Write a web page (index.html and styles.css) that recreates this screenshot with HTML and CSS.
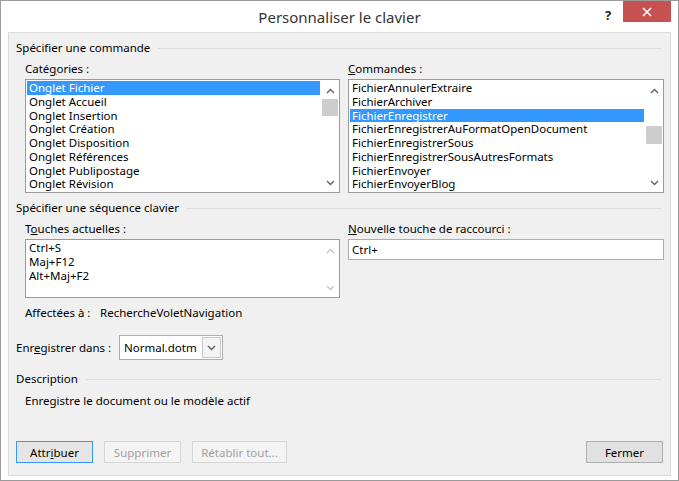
FILE: index.html
```html
<!DOCTYPE html>
<html>
<head>
    <meta charset="utf-8">
    <link rel="stylesheet" href="styles.css">
</head>
<body>
    <div class="window">
        <div class="titlebar">
            <div class="title">Personnaliser le clavier</div>
            <div class="controls">
                <div class="help">?</div>
                <div class="close">
                    <svg width="10" height="10" viewBox="0 0 10 10"><path d="M1 1L9 9M9 1L1 9" stroke="#fff" stroke-width="1.6" fill="none"/></svg>
                </div>
            </div>
        </div>

        <div class="client">
            <div class="group-title">Spécifier une commande</div>
            <div class="pair">
                <div class="col col-left">
                    <div class="label">Caté<u>g</u>ories :</div>
                    <div class="listbox tall">
                        <ul class="items">
                            <li class="selected">Onglet Fichier</li>
                            <li>Onglet Accueil</li>
                            <li>Onglet Insertion</li>
                            <li>Onglet Création</li>
                            <li>Onglet Disposition</li>
                            <li>Onglet Références</li>
                            <li>Onglet Publipostage</li>
                            <li>Onglet Révision</li>
                        </ul>
                        <div class="scrollbar">
                            <div class="sb-btn up"><svg width="9" height="6" viewBox="0 0 9 6"><polyline points="1,5 4.5,1.5 8,5" fill="none" stroke="#606060" stroke-width="1.4"/></svg></div>
                            <div class="sb-track"><div class="thumb"></div></div>
                            <div class="sb-btn down"><svg width="9" height="6" viewBox="0 0 9 6"><polyline points="1,1 4.5,4.5 8,1" fill="none" stroke="#606060" stroke-width="1.4"/></svg></div>
                        </div>
                    </div>
                </div>
                <div class="col col-right">
                    <div class="label"><u>C</u>ommandes :</div>
                    <div class="listbox tall">
                        <ul class="items">
                            <li>FichierAnnulerExtraire</li>
                            <li>FichierArchiver</li>
                            <li class="selected">FichierEnregistrer</li>
                            <li>FichierEnregistrerAuFormatOpenDocument</li>
                            <li>FichierEnregistrerSous</li>
                            <li>FichierEnregistrerSousAutresFormats</li>
                            <li>FichierEnvoyer</li>
                            <li>FichierEnvoyerBlog</li>
                        </ul>
                        <div class="scrollbar">
                            <div class="sb-btn up"><svg width="9" height="6" viewBox="0 0 9 6"><polyline points="1,5 4.5,1.5 8,5" fill="none" stroke="#606060" stroke-width="1.4"/></svg></div>
                            <div class="sb-track"><div class="thumb thumb-mid"></div></div>
                            <div class="sb-btn down"><svg width="9" height="6" viewBox="0 0 9 6"><polyline points="1,1 4.5,4.5 8,1" fill="none" stroke="#606060" stroke-width="1.4"/></svg></div>
                        </div>
                    </div>
                </div>
            </div>

            <div class="group-title second">Spécifier une séquence clavier</div>
            <div class="pair">
                <div class="col col-left">
                    <div class="label">T<u>o</u>uches actuelles :</div>
                    <div class="listbox short">
                        <ul class="items">
                            <li>Ctrl+S</li>
                            <li>Maj+F12</li>
                            <li>Alt+Maj+F2</li>
                        </ul>
                        <div class="scrollbar disabled">
                            <div class="sb-btn up"><svg width="9" height="6" viewBox="0 0 9 6"><polyline points="1,5 4.5,1.5 8,5" fill="none" stroke="#c4c4c4" stroke-width="1.4"/></svg></div>
                            <div class="sb-track"></div>
                            <div class="sb-btn down"><svg width="9" height="6" viewBox="0 0 9 6"><polyline points="1,1 4.5,4.5 8,1" fill="none" stroke="#c4c4c4" stroke-width="1.4"/></svg></div>
                        </div>
                    </div>
                </div>
                <div class="col col-right">
                    <div class="label"><u>N</u>ouvelle touche de raccourci :</div>
                    <div class="textbox">Ctrl+</div>
                </div>
            </div>

            <div class="assigned">
                <span class="assigned-label">Affectées à :</span>
                <span>RechercheVoletNavigation</span>
            </div>

            <div class="save-row">
                <span class="save-label">Enr<u>e</u>gistrer dans :</span>
                <div class="combo">
                    <span class="combo-text">Normal.dotm</span>
                    <span class="combo-btn"><svg width="9" height="6" viewBox="0 0 9 6"><polyline points="1,1 4.5,4.5 8,1" fill="none" stroke="#606060" stroke-width="1.4"/></svg></span>
                </div>
            </div>

            <div class="group-title third">Description</div>
            <div class="description">Enregistre le document ou le modèle actif</div>

            <div class="buttons">
                <button class="btn default">Attr<u>i</u>buer</button>
                <button class="btn" disabled>Supprimer</button>
                <button class="btn wide" disabled>Rétablir tout...</button>
                <button class="btn close-btn">Fermer</button>
            </div>
        </div>
    </div>
</body>
</html>
```

FILE: styles.css
```css
* {
    margin: 0;
    padding: 0;
    box-sizing: border-box;
}

body {
    width: 679px;
    height: 481px;
    font-family: "Segoe UI", "Noto Sans", sans-serif;
    font-size: 11.5px;
    color: #000;
    background: #fff;
}

.window {
    width: 679px;
    height: 481px;
    border: 1px solid #9b9b9b;
    background: #fff;
    display: flex;
    flex-direction: column;
}

/* title bar */
.titlebar {
    height: 31px;
    flex-shrink: 0;
    display: flex;
}

.title {
    flex: 1;
    padding-left: 79px;
    padding-top: 6px;
    text-align: center;
    font-size: 15px;
    line-height: 20px;
    color: #333;
}

.controls {
    width: 79px;
    display: flex;
    align-items: flex-start;
}

.help {
    width: 18px;
    margin-top: 6px;
    text-align: center;
    font-weight: bold;
    font-size: 13px;
    line-height: 16px;
    color: #222;
}

.close {
    width: 48px;
    height: 21px;
    margin-left: 6px;
    background: #c75050;
    display: flex;
    align-items: center;
    justify-content: center;
}

/* client area */
.client {
    flex: 1;
    margin: 0 7px 4px;
    border: 1px solid #dcdcdc;
    background: #f0f0f0;
    padding: 7px 6px 12px 7px;
    display: flex;
    flex-direction: column;
}

.group-title {
    display: flex;
    align-items: center;
    line-height: 16px;
}

.group-title::after {
    content: "";
    flex: 1;
    height: 1px;
    background: #dcdcdc;
    margin: 1px 3px 0 8px;
}

.group-title.second {
    margin-top: 7px;
}

.group-title.third {
    margin-top: 11px;
}

.pair {
    display: flex;
    gap: 8px;
    padding-left: 9px;
}

.col-left {
    width: 315px;
}

.col-right {
    width: 316px;
}

.label {
    margin-top: 5px;
    margin-bottom: 2px;
    line-height: 16px;
}

/* list boxes */
.listbox {
    display: flex;
    background: #fff;
    border: 1px solid #9a9a9a;
    overflow: hidden;
}

.listbox.tall {
    height: 114px;
}

.listbox.short {
    height: 59px;
}

.items {
    flex: 1;
    list-style: none;
    padding: 1px 1px 0 1px;
}

.items li {
    height: 13.75px;
    line-height: 13.75px;
    padding-left: 2px;
    white-space: nowrap;
}

.items li.selected {
    background: #3399ff;
    color: #fff;
}

.scrollbar {
    width: 18px;
    display: flex;
    flex-direction: column;
    background: #fff;
}

.sb-btn {
    height: 18px;
    display: flex;
    align-items: center;
    justify-content: center;
}

.sb-btn.up {
    padding-top: 3px;
}

.sb-track {
    flex: 1;
}

.thumb {
    height: 17px;
    margin: 1px 1px 0 1px;
    background: #cdcdcd;
}

.thumb-mid {
    margin-top: 28px;
    height: 18px;
}

.textbox {
    height: 21px;
    border: 1px solid #abadb3;
    background: #fff;
    padding-left: 3px;
    line-height: 19px;
}

.assigned {
    margin-top: 7px;
    padding-left: 9px;
    line-height: 16px;
    display: flex;
}

.assigned-label {
    width: 75px;
}

.save-row {
    margin-top: 14px;
    display: flex;
    align-items: center;
}

.save-label {
    width: 103px;
    line-height: 16px;
}

.combo {
    width: 104px;
    height: 25px;
    border: 1px solid #abadb3;
    background: #fff;
    display: flex;
}

.combo-text {
    flex: 1;
    padding-left: 4px;
    line-height: 23px;
}

.combo-btn {
    width: 19px;
    margin: 1px;
    border: 1px solid #c8c8c8;
    background: #f4f4f4;
    display: flex;
    align-items: center;
    justify-content: center;
}

.description {
    margin-top: 6px;
    padding-left: 9px;
    line-height: 16px;
}

/* buttons */
.buttons {
    margin-top: auto;
    display: flex;
    padding-right: 1px;
}

.btn {
    width: 77px;
    height: 22px;
    margin-right: 11px;
    border: 1px solid #adadad;
    background: #e1e1e1;
    font-family: inherit;
    font-size: 11.5px;
    color: #000;
}

.btn.default {
    border-color: #3399ff;
    background: #e5e5e5;
}

.btn:disabled {
    border-color: #d5d5d5;
    background: #f4f4f4;
    color: #a0a0a0;
}

.btn.wide {
    width: 95px;
}

.btn.close-btn {
    margin-left: auto;
    margin-right: 0;
}
```
